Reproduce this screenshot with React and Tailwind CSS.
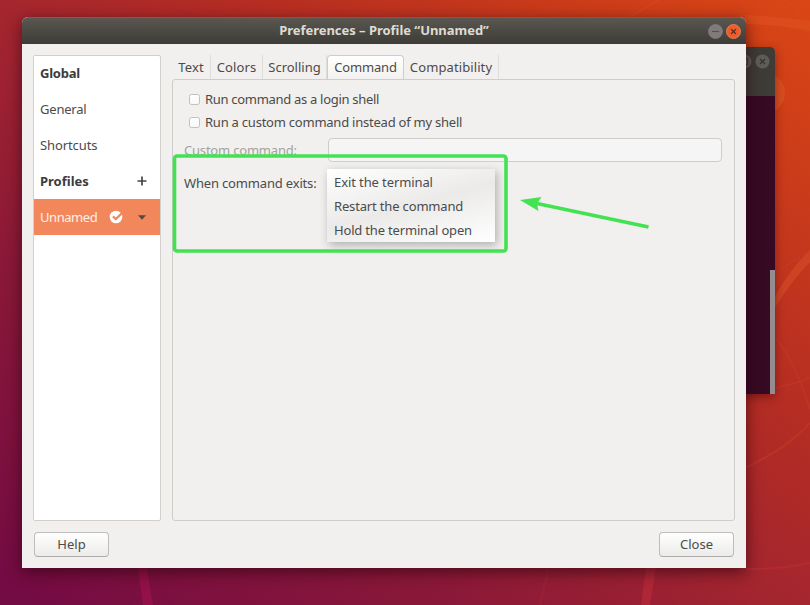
import React from 'react';

const tabs = [
  { name: 'Text', box: 'w-[39px]', text: 'tracking-[0.1px]' },
  { name: 'Colors', box: 'w-[52px]', text: 'tracking-[0.1px]' },
  { name: 'Scrolling', box: 'w-[64px]', text: 'tracking-[0px]' },
  { name: 'Command', box: 'w-[77px]', text: 'tracking-[-0.15px]' },
  { name: 'Compatibility', box: 'w-[95px]', text: 'tracking-[0.1px]' },
];

const Wallpaper = () => (
  <svg className="absolute inset-0" width="810" height="605" viewBox="0 0 810 605" fill="none">
    <path d="M745 15 Q782 17 810 21 V31 Q780 25 745 24Z" fill="#e0521f" opacity=".6" />
    <path d="M630 17 Q646 7 659 0M786 0L810 21" stroke="#e0521f" strokeWidth="1.5" opacity=".3" />
    <circle cx="765" cy="93" r="20" fill="#d64d1f" />
    <path d="M810 250 Q790 269 774 298 V309 Q792 280 810 262Z" fill="#d24b28" opacity=".65" />
    <path d="M774 273L810 251M776 338Q796 364 810 409M745 393Q780 389 810 378" stroke="#c93e2a" strokeWidth="2" opacity=".35" />
    <path d="M746 467Q784 451 810 423" stroke="#ca4028" strokeWidth="2" opacity=".4" />
    <path d="M746 569Q785 569 810 563" stroke="#bd3034" strokeWidth="2" opacity=".5" />
    <path d="M138 568H147L153 605H143Z" fill="#981249" opacity=".8" />
    <path d="M646 568H656L650 605H641Z" fill="#b52a38" opacity=".75" />
    <path d="M548 570L540 605" stroke="#b12837" strokeWidth="3" opacity=".25" />
    <path d="M0 111L22 92V17L0 60Z" fill="#b22c38" opacity=".1" />
  </svg>
);

const TerminalWindow = () => (
  <div className="absolute left-[600px] top-[47px] flex h-[347px] w-[175px] flex-col rounded-t-[5px] shadow-[0_3px_10px_rgba(60,0,10,0.45)]">
    <div className="flex h-[49px] justify-end gap-[3px] rounded-t-[5px] bg-[#3d3c37] pr-[5px] pt-[7px]">
      <svg width="15" height="15" viewBox="0 0 15 15" fill="none">
        <circle cx="7.5" cy="7.5" r="7" fill="#5f5d56" />
        <rect x="4.5" y="4.5" width="6" height="6" stroke="#3b3a36" />
      </svg>
      <svg width="15" height="15" viewBox="0 0 15 15" fill="none">
        <circle cx="7.5" cy="7.5" r="7" fill="#5f5d56" />
        <path d="M5 5L10 10M10 5L5 10" stroke="#33322e" strokeWidth="1.2" />
      </svg>
    </div>
    <div className="flex flex-1 items-end justify-end bg-[#360a23]">
      <div className="h-[124px] w-[5px] bg-[#958c90]" />
    </div>
  </div>
);

const TitleBar = () => (
  <div className="grid h-[27px] shrink-0 grid-cols-[60px_1fr_60px] items-center rounded-t-[6px] border-t border-[#67655d] bg-linear-to-b from-[#59574f] to-[#3d3c37]">
    <span />
    <span className="-mt-[2px] text-center text-[13px] font-bold leading-none tracking-[-0.03px] text-[#dfdbd2]">
      Preferences – Profile “Unnamed”
    </span>
    <div className="flex justify-end gap-[3px] pr-[5px]">
      <svg width="15" height="15" viewBox="0 0 15 15" fill="none">
        <circle cx="7.5" cy="7.5" r="7" fill="#807b7a" stroke="#8d8886" strokeWidth=".6" />
        <path d="M4 7.5H11" stroke="#56534e" strokeWidth="1.1" />
      </svg>
      <svg width="15" height="15" viewBox="0 0 15 15" fill="none">
        <circle cx="7.5" cy="7.5" r="7" fill="#ed5d2b" stroke="#f78458" strokeWidth=".8" />
        <path d="M5.1 5.1L9.9 9.9M9.9 5.1L5.1 9.9" stroke="#562917" strokeWidth="1.3" />
      </svg>
    </div>
  </div>
);

const Sidebar = () => (
  <div className="flex h-[466px] w-[128px] flex-col rounded-[2px] border border-[#d3d0cb] bg-white leading-none">
    <div className="flex h-[35px] items-center pl-[6px] font-bold tracking-[-0.25px] text-[#3c3c3c]">
      <span>Global</span>
    </div>
    <div className="flex h-[36px] items-center pl-[6px] tracking-[-0.2px]"><span>General</span></div>
    <div className="flex h-[36px] items-center pl-[6px] tracking-[-0.1px]"><span>Shortcuts</span></div>
    <div className="flex h-[36px] items-center justify-between pl-[6px] pr-[13px] font-bold text-[#3c3c3c]">
      <span>Profiles</span>
      <svg width="10" height="10" viewBox="0 0 10 10" stroke="#454545" strokeWidth="1.7">
        <path d="M5 .5V9.5M.5 5H9.5" />
      </svg>
    </div>
    <div className="flex h-[36px] items-center bg-[#f1875b] pl-[6px] text-[#fdf0e9]">
      <span className="w-[69px] tracking-[-0.45px]">Unnamed</span>
      <svg width="14" height="14" viewBox="0 0 14 14" fill="none">
        <circle cx="7" cy="7" r="6.3" fill="#fff" />
        <path d="M3.9 6.4L6.8 9.1L13.5 2.6" stroke="#f1875b" strokeWidth="2.2" />
      </svg>
      <svg className="ml-[15px]" width="8" height="5" viewBox="0 0 8 5">
        <path d="M0 .3H8L4 4.8Z" fill="#504b46" />
      </svg>
    </div>
  </div>
);

const Check = ({ children, className }) => (
  <div className="flex h-[23px] items-center gap-[5px] pl-[16px]">
    <span className="h-[11px] w-[11px] rounded-[2.5px] border border-[#c3c1bd] bg-linear-to-b from-white to-[#f8f8f7]" />
    <span className={className}>{children}</span>
  </div>
);

const Notebook = () => (
  <div className="flex h-[466px] w-[563px] flex-col leading-none">
    <div className="flex h-[24px] shrink-0 whitespace-nowrap">
      {tabs.map((tab) => (
        <div
          key={tab.name}
          className={`flex shrink-0 items-center justify-center ${tab.box} ${
            tab.name === 'Command'
              ? 'rounded-t-[4px] border border-b-0 border-[#cfcdc9] bg-linear-to-b from-white to-[#f3f2f0]'
              : 'border-r border-[#dfddda]'
          }`}
        >
          <span className={tab.text}>{tab.name}</span>
        </div>
      ))}
    </div>
    <div className="relative flex flex-1 flex-col rounded-[3px] border border-[#cfcdca] pt-[8px]">
      <Check className="tracking-[-0.3px]">Run command as a login shell</Check>
      <Check className="tracking-[-0.23px]">Run a custom command instead of my shell</Check>
      <div className="mt-[4px] flex h-[24px] items-center pl-[11px]">
        <span className="w-[144px] tracking-[-0.2px] text-[#a4a29e]">Custom command:</span>
        <span className="h-[24px] w-[394px] rounded-[4px] border border-[#cfcdca] bg-[#f5f5f5]" />
      </div>
      <div className="mt-[9px] flex h-[24px] items-center pl-[11px] tracking-[-0.17px]">
        <span>When command exits:</span>
      </div>

      {/* open drop-down */}
      <div className="absolute left-[154px] top-[89px] flex h-[73px] w-[168px] flex-col bg-linear-[165deg] from-white via-[#ebeae9] via-50% to-white pt-[1px] shadow-[2px_3px_9px_rgba(0,0,0,0.28)]">
        <div className="flex h-[24px] items-center pl-[7px] tracking-[-0.1px]"><span>Exit the terminal</span></div>
        <div className="flex h-[24px] items-center pl-[7px] tracking-[-0.16px]"><span>Restart the command</span></div>
        <div className="flex h-[24px] items-center pl-[7px] tracking-[-0.18px]"><span>Hold the terminal open</span></div>
      </div>
    </div>
  </div>
);

const Button = ({ children }) => (
  <button className="flex h-[25px] w-[75px] items-center justify-center rounded-[4px] border border-[#bfbdb9] border-b-[#aeaca8] bg-linear-to-b from-white to-[#ebebe9] leading-none">
    <span>{children}</span>
  </button>
);

const PreferencesWindow = () => (
  <div className="absolute left-[22px] top-[17px] flex h-[551px] w-[724px] flex-col rounded-t-[6px] bg-[#f1f0ee] shadow-[0_4px_16px_rgba(40,0,15,0.65)]">
    <TitleBar />
    <div className="flex justify-between px-[11px] pt-[11px]">
      <Sidebar />
      <Notebook />
    </div>
    <div className="flex justify-between px-[12px] pt-[11px]">
      <Button>Help</Button>
      <Button>Close</Button>
    </div>
  </div>
);

const Annotations = () => (
  <svg className="absolute inset-0" width="810" height="605" viewBox="0 0 810 605" fill="none">
    <rect x="174.5" y="156" width="331.5" height="95" rx="2.5" stroke="#42e253" strokeWidth="3.6" />
    <path d="M537 203.5L648.5 227" stroke="#42e253" strokeWidth="3.4" />
    <path d="M520 200L541.5 197L537 203.5L538.5 211Z" fill="#42e253" />
  </svg>
);

export default function App() {
  return (
    <div className="relative h-[605px] w-[810px] overflow-hidden bg-[linear-gradient(to_top_right,#720a44_0%,#8a1838_28%,#a5262e_50%,#b52d23_65%,#ca3b1a_84%,#da4615_100%)] font-['Noto_Sans','Open_Sans',sans-serif] text-[13px] text-[#4c4b49]">
      <Wallpaper />
      <TerminalWindow />
      <PreferencesWindow />
      <Annotations />
    </div>
  );
}
